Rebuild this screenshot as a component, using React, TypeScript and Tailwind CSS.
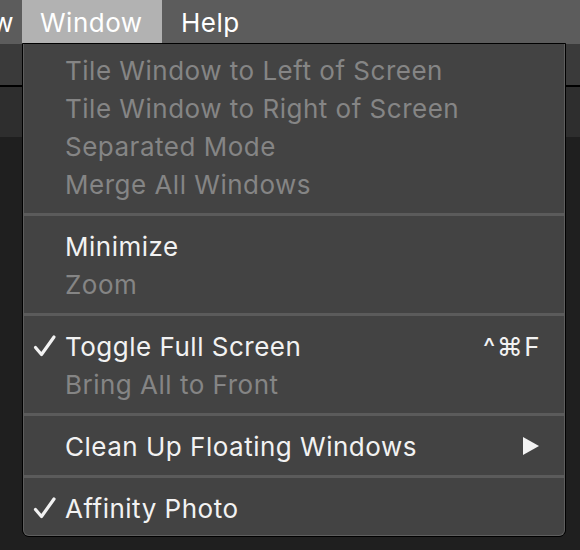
import React from 'react';

type Item = { label: string; enabled?: boolean; checked?: boolean; shortcut?: string; submenu?: boolean };

const groups: Item[][] = [
  [
    { label: 'Tile Window to Left of Screen' },
    { label: 'Tile Window to Right of Screen' },
    { label: 'Separated Mode' },
    { label: 'Merge All Windows' },
  ],
  [{ label: 'Minimize', enabled: true }, { label: 'Zoom' }],
  [
    { label: 'Toggle Full Screen', enabled: true, checked: true, shortcut: '^⌘F' },
    { label: 'Bring All to Front' },
  ],
  [{ label: 'Clean Up Floating Windows', enabled: true, submenu: true }],
  [{ label: 'Affinity Photo', enabled: true, checked: true }],
];

const Check = () => (
  <svg width="24" height="24" viewBox="0 0 24 24" className="absolute left-[9px] top-[7px]">
    <path d="M2.5 13.5 L8.5 20.5 L21 3" fill="none" stroke="#f2f2f2" strokeWidth="3.2" strokeLinecap="round" strokeLinejoin="round" />
  </svg>
);

const MenuRow = ({ item }: { item: Item }) => (
  <div
    className={`relative flex items-center h-[38px] pl-[41px] pr-[23px] ${item.enabled ? 'text-[#f2f2f2]' : 'text-[#858585]'}`}
  >
    {item.checked && <Check />}
    <span className="flex-1 whitespace-nowrap">{item.label}</span>
    {item.shortcut && <span className="tracking-[1.5px]">{item.shortcut}</span>}
    {item.submenu && (
      <svg width="18" height="18" viewBox="0 0 18 18" className="mr-[1px]">
        <path d="M1 0 L17 9 L1 18 Z" fill="#f2f2f2" />
      </svg>
    )}
  </div>
);

export default function App() {
  return (
    <div
      className="relative w-[580px] h-[550px] overflow-hidden bg-[#1f1f1f] text-[26px] tracking-[0.5px]"
      style={{ fontFamily: 'Inter, "Noto Sans", sans-serif' }}
    >
      {/* menu bar */}
      <div className="flex h-[44px] bg-[#5c5c5c] text-white items-stretch">
        <div className="w-[22px] overflow-hidden flex items-center justify-end">
          <span className="-mr-[10px] pr-[18px]">w</span>
        </div>
        <div className="w-[140px] bg-[#b2b2b2] flex items-center pl-[18px]">Window</div>
        <div className="flex items-center pl-[19px]">Help</div>
      </div>
      {/* background strips of the app window */}
      <div className="h-[43px] bg-[#3a3a3a] border-b-2 border-black" />
      <div className="h-[50px] bg-[#2e2e2e]" />

      {/* dropdown */}
      <div className="absolute left-[22px] top-[43px] w-[544px] rounded-b-[7px] border border-black bg-black">
        <div className="rounded-b-[6px] border-x border-b border-[#5e5e5e] bg-[#434343] pt-[7px] pb-[8px]">
          {groups.map((g, gi) => (
            <div key={gi}>
              {gi > 0 && (
                <div className="pt-[10px] pb-[11px]">
                  <div className="h-[3px] bg-[#5b5b5b]" />
                </div>
              )}
              {g.map((it) => (
                <MenuRow key={it.label} item={it} />
              ))}
            </div>
          ))}
        </div>
      </div>
    </div>
  );
}
